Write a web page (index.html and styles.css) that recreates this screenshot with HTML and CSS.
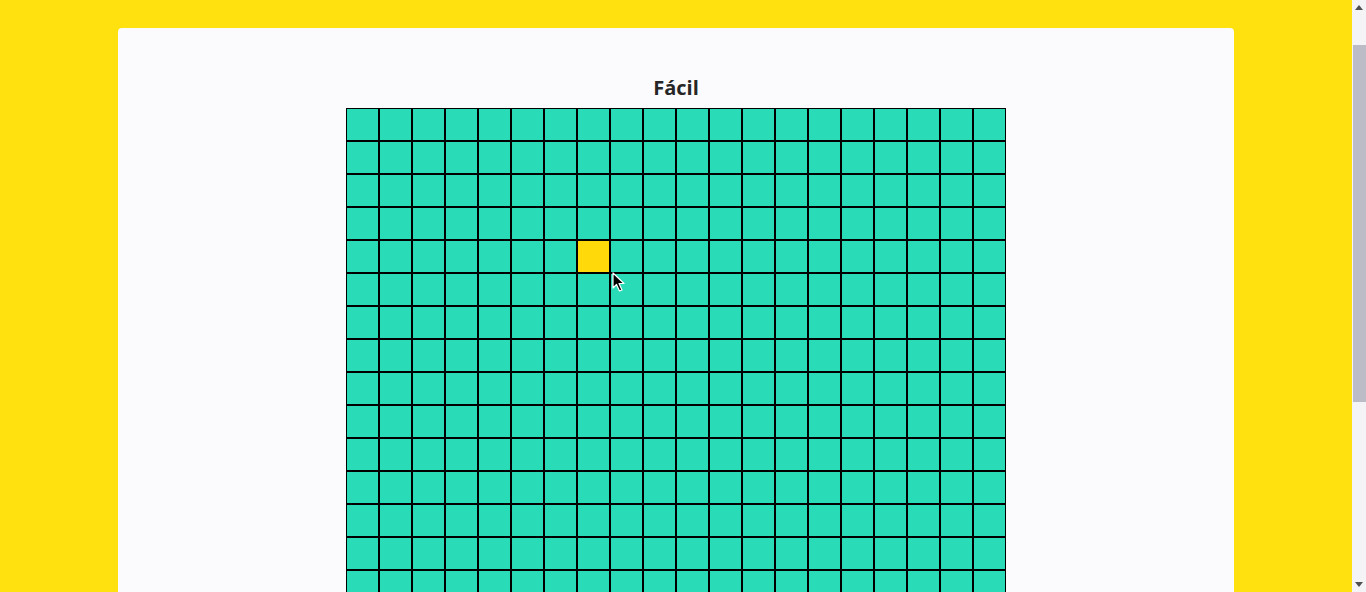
FILE: index.html
```html
<!DOCTYPE html>
<html lang="pt">
<head>
<meta charset="utf-8">
<title>Fácil</title>
<link rel="stylesheet" href="styles.css">
</head>
<body>
<main class="card">
  <h2 class="title">Fácil</h2>
  <div class="board" id="board"></div>
  <div class="cursor">
    <svg width="14" height="20" viewBox="0 0 14 20"><path d="M1 1 L1 16 L4.5 12.5 L7.5 19 L10 18 L7 11.5 L12 11.5 Z" fill="#000" stroke="#fff" stroke-width="1.2" stroke-linejoin="round"/></svg>
  </div>
</main>
<div class="scrollbar">
  <div class="sb-btn"><svg width="8" height="5" viewBox="0 0 8 5"><path d="M0 5 L4 0 L8 5 Z" fill="#505050"/></svg></div>
  <div class="sb-track"><div class="sb-thumb"></div></div>
  <div class="sb-btn"><svg width="8" height="5" viewBox="0 0 8 5"><path d="M0 0 L8 0 L4 5 Z" fill="#505050"/></svg></div>
</div>
<script src="script.js"></script>
</body>
</html>
```
FILE: styles.css
```css
html, body { margin: 0; padding: 0; }
body {
  background: #ffe10f;
  font-family: "Open Sans", "Liberation Sans", sans-serif;
  padding: 28px 132px 130px 118px;
}
.scrollbar {
  position: fixed;
  top: 0;
  right: 0;
  width: 14px;
  height: 100vh;
  background: #f4f4f7;
  display: flex;
  flex-direction: column;
}
.sb-btn {
  height: 15px;
  flex: none;
  display: flex;
  align-items: center;
  justify-content: center;
}
.sb-track {
  flex: 1;
  padding: 30px 0 0 1px;
}
.sb-thumb {
  height: 357px;
  background: #bcbcc6;
}
.card {
  position: relative;
  background: #fbfbfd;
  border-radius: 4px;
  padding: 48px 0 28px;
  display: flex;
  flex-direction: column;
  align-items: center;
}
.title {
  margin: 0 0 8px;
  font-size: 20px;
  line-height: 24px;
  font-weight: 700;
  color: #262626;
}
.board {
  display: grid;
  grid-template-columns: repeat(20, 33px);
  grid-auto-rows: 33px;
}
.cell {
  box-sizing: border-box;
  border: 1px solid #000;
  background: #2adbb8;
}
.cell.on { background: #ffd90a; }
.cursor {
  position: absolute;
  left: 494px;
  top: 244px;
  width: 14px;
  height: 20px;
}
```
FILE: script.js
```js
var b = document.getElementById('board');
for (var r = 0; r < 20; r++) {
  for (var c = 0; c < 20; c++) {
    var d = document.createElement('div');
    d.className = 'cell' + (r === 4 && c === 7 ? ' on' : '');
    b.appendChild(d);
  }
}
```
